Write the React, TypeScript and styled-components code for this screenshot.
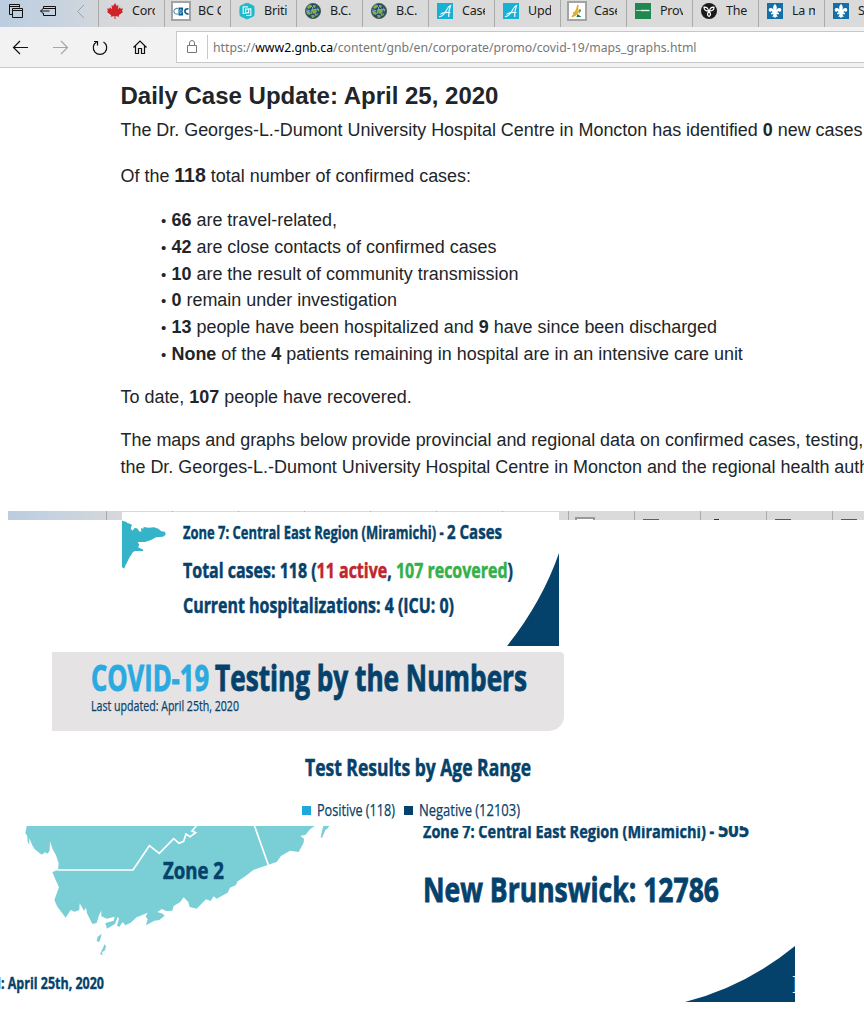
import React, { useLayoutEffect, useRef, useState } from "react";
import styled, { createGlobalStyle } from "styled-components";

const Global = createGlobalStyle`
  * { box-sizing: border-box; }
  body { margin: 0; background: #fff; overflow: hidden; }
`;

const ui = `"Noto Sans", "Open Sans", sans-serif`;
const navy = "#05426b";

const FitBox = styled.span<{ $w: number; $lh: number; $size: number; $bold?: boolean; $color?: string; $font?: string }>`
  display: block;
  flex: none;
  width: ${(p) => p.$w}px;
  height: ${(p) => p.$lh}px;
  line-height: ${(p) => p.$lh}px;
  font-family: ${(p) => p.$font || `"Open Sans", sans-serif`};
  font-size: ${(p) => p.$size}px;
  font-weight: ${(p) => (p.$bold ? 700 : 400)};
  -webkit-text-stroke: ${(p) => (p.$font ? 0 : p.$bold ? p.$size * 0.024 : 0.25)}px;
  color: ${(p) => p.$color || navy};
  white-space: pre;
`;
const FitInner = styled.span`
  display: inline-block;
  transform-origin: 0 50%;
`;

type FitProps = { w: number; lh: number; size: number; bold?: boolean; color?: string; font?: string; children: React.ReactNode };

/* Condenses a line of text to the given width. */
function Fit({ w, lh, size, bold, color, font, children }: FitProps) {
  const ref = useRef<HTMLSpanElement>(null);
  const [k, setK] = useState(1);
  useLayoutEffect(() => {
    const measure = () => {
      if (ref.current && ref.current.offsetWidth) {
        const cs = parseFloat(getComputedStyle(ref.current).width);
        setK(w / cs);
      }
    };
    measure();
    document.fonts?.ready.then(measure);
  }, [w]);
  return (
    <FitBox $w={w} $lh={lh} $size={size} $bold={bold} $color={color} $font={font}>
      <FitInner ref={ref} style={{ transform: `scaleX(${k})` }}>{children}</FitInner>
    </FitBox>
  );
}

const Page = styled.div`
  width: 864px;
  height: 1034px;
  overflow: hidden;
  background: #fff;
`;

/* Browser chrome */
const TabBar = styled.div`
  display: flex;
  height: 27px;
  overflow: hidden;
  background: linear-gradient(90deg, #bccddf 0, #c8d3df 60px, #d6d8da 110px, #dadada 180px);
`;
const TabTools = styled.div`
  display: flex;
  flex: none;
  width: 98px;
  height: 27px;
`;
const Tab = styled.div`
  display: flex;
  flex: none;
  width: 66px;
  height: 27px;
  padding: 3px 0 0 8px;
  border-left: 1px solid #aaa;
`;
const TabIcon = styled.span`
  flex: none;
  width: 20px;
  height: 18px;
  margin: 0 4px 0 -2px;
  svg { display: block; }
`;
const TabLabel = styled.span`
  width: 23px;
  overflow: hidden;
  margin-left: 3px;
  font: 12.5px/16px ${ui};
  letter-spacing: -0.2px;
  white-space: nowrap;
  color: #1c1c1c;
`;
const Toolbar = styled.div`
  display: flex;
  height: 41px;
  background: #f2f2f2;
  border-bottom: 1px solid #c9c9c9;
`;
const NavIcons = styled.div`
  flex: none;
  width: 176px;
  svg { display: block; }
`;
const Address = styled.div`
  display: flex;
  flex: 1;
  align-items: center;
  height: 32px;
  margin-top: 4px;
  background: #fff;
  border: 1px solid #c8c8c8;
  border-right: 0;
`;
const LockBox = styled.span`
  flex: none;
  width: 31px;
  height: 24px;
  border-right: 1px solid #c8c8c8;
  margin-right: 5px;
  svg { display: block; }
`;
const Host = styled.span`
  color: #000;
`;

/* Article */
const Article = styled.main`
  height: 443px;
  padding: 12px 0 0 120.5px;
  font: 17.95px/27px "Liberation Sans", Arial, sans-serif;
  color: #212529;
  white-space: nowrap;
`;
const Title = styled.h1`
  margin: 0;
  font-size: 24px;
  line-height: 32px;
`;
const Para = styled.p<{ $top: number; $tight?: boolean }>`
  margin: ${(p) => p.$top}px 0 0;
  letter-spacing: ${(p) => (p.$tight ? "-0.01px" : "0")};
`;
const Big = styled.b`
  display: inline-block;
  height: 20px;
  line-height: 20px;
  font-size: 19.5px;
`;
const List = styled.ul`
  list-style: none;
  margin: 17px 0 0;
  padding: 0 0 0 40.5px;
  line-height: 26.75px;
`;
const Dot = styled.span`
  display: inline-block;
  width: 10.5px;
  font-size: 15px;
  line-height: 15px;
`;

/* Leftover slice of the tab bar behind the zone summary */
const Strip = styled.div`
  display: flex;
  height: 9px;
  margin-left: 8px;
  overflow: hidden;
  background: linear-gradient(90deg, #bccddf 0, #c8d3df 60px, #d6d8da 110px, #dadada 180px);
`;
const StripLead = styled.div<{ $w: number }>`
  flex: none;
  width: ${(p) => p.$w}px;
`;
const StripTab = styled.div`
  flex: none;
  width: 66px;
  height: 9px;
  border-left: 1px solid #aaa;
  padding-left: 8px;
`;
const StripIcon = styled.div<{ $c: string; $w: number; $x: number; $framed?: boolean }>`
  width: ${(p) => p.$w}px;
  height: ${(p) => (p.$framed ? 3 : 1)}px;
  margin: ${(p) => (p.$framed ? 6 : 8)}px 0 0 ${(p) => p.$x}px;
  border: ${(p) => (p.$framed ? "2px solid #999" : "0")};
  border-bottom: 0;
  background: ${(p) => p.$c};
`;
const ZoneCard = styled.section`
  position: relative;
  display: flex;
  width: 437px;
  height: 134px;
  margin: -8px 0 0 122px;
  padding-top: 1px;
  background: #fff;
`;
const Coast = styled.svg`
  flex: none;
  display: block;
  width: 61px;
  height: 70px;
  margin-top: -1px;
`;
const Corner = styled.svg`
  position: absolute;
  right: 0;
  bottom: 0;
`;
const Row = styled.div`
  display: flex;
`;
const Red = styled.span`color: #bf272d;`;
const Green = styled.span`color: #35b04a;`;

const Banner = styled.header`
  width: 512px;
  height: 79px;
  margin: 6px 0 0 52px;
  padding: 5px 0 0 39px;
  background: #e5e3e4;
  border-radius: 0 4px 15px 0;
`;
const TitleRow = styled.div`
  display: flex;
  gap: 6px;
  height: 40px;
`;
const AgeRange = styled.section`
  height: 95px;
  padding: 21px 0 0 302px;
`;
const AgeTitle = styled.div`
  padding-left: 3px;
`;
const Legend = styled.div`
  display: flex;
  align-items: center;
  margin-top: 14px;
`;
const Swatch = styled.i<{ $c: string; $ml?: number }>`
  flex: none;
  width: 9px;
  height: 9px;
  margin: 0 6px 0 ${(p) => p.$ml || 0}px;
  background: ${(p) => p.$c};
`;

const MapSection = styled.section`
  position: relative;
  display: flex;
  width: 795px;
  height: 176px;
  overflow: hidden;
`;
const MapColumn = styled.div`
  position: relative;
  flex: none;
  width: 423px;
  > svg { display: block; }
`;
const MapLabel = styled.div`
  position: absolute;
  left: 163px;
  top: 30px;
`;
const Updated = styled.div`
  margin: 17px 0 0 -7px;
`;
const Total = styled.div`
  margin: 28px 0 0;
`;
const CornerMark = styled.span`
  position: absolute;
  right: 0;
  bottom: 4px;
  width: 3px;
  overflow: hidden;
  font: 25px/26px "Liberation Serif", serif;
  color: #fff;
`;

const Globe = () => (
  <svg width="20" height="18" viewBox="0 0 20 18">
    <circle cx="10" cy="8" r="7.600" fill="#244c66" stroke="#3c4f55" strokeWidth=".8" />
    <path d="M4 4l3-2.500 2 1L7.500 5 5 6zM10 2l3 .5L12 5l-2-1zM3 8l3 0 2 2-1 2-3-1zM9 6l4 0 1 3-3 2-2-2zM14 4l2.500 3-1.500 2zM8 12l3 0 1 2-3 1zM13 11l2.500-1-1.500 3z" fill="#83ad4e" />
    <path d="M8 3l2 2-2 3 1 3M3 7l4 .5M12 6l4 1M12 10l1 3" stroke="#6fb0dd" strokeWidth="1" fill="none" />
  </svg>
);
const ScriptA = () => (
  <svg width="20" height="18" viewBox="0 0 20 18">
    <rect x="2" width="16" height="16" fill="#19b0d6" />
    <path d="M4 13.500c3 .5 5-2 7-5.500s2.500-5 4.500-5.500c-1 3-2.200 7-1.700 11.500M5.500 11.500c2-2.500 5-2 10-2" stroke="#e9fbff" strokeWidth="1.200" fill="none" />
  </svg>
);
const Fleur = () => (
  <svg width="20" height="18" viewBox="0 0 20 18">
    <rect x="2" width="16" height="16" fill="#146fa9" />
    <path d="M10 1c2 2 2.500 4 .8 8 .7-3 2.200-4.500 4-4 2 .5 2 3.500-.3 4 0-1.500-1.500-1-2 .8H14v1.400h-2.500c0 1 .7 1.800 1.500 2.300-1.200.2-2 .2-3 1.500-1-1.300-1.800-1.300-3-1.500.8-.5 1.500-1.300 1.500-2.300H6V9.800h1.500C7 8 5.500 7.500 5.500 9 3.200 8.500 3.200 5.500 5.200 5c1.800-.5 3.300 1 4 4C7.500 5 8 3 10 1z" fill="#fff" />
  </svg>
);
const Maple = () => (
  <svg width="20" height="18" viewBox="0 0 20 18">
    <path d="M10 0l1.800 3 1.700-1-.6 4.200 2.100-2 .6 1.500 2.400-.3-1 2.600L18 9l-4.200 3.200.4 1.500-3.700-.6V16h-1v-2.900l-3.700.6.4-1.500L2 9l1-1-1-2.600 2.400.3.600-1.500 2.100 2L6.500 2l1.700 1z" fill="#cf2229" />
  </svg>
);
const Cdc = () => (
  <svg width="20" height="18" viewBox="0 0 20 18" overflow="visible">
    <rect x="1" y="-1" width="18" height="18" fill="#fff" stroke="#a3a3a3" strokeWidth="2" />
    <path d="M7 5.500C1.500 4.500 1.500 12 7 11" fill="none" stroke="#4b93b8" strokeWidth="1.100" />
    <path d="M7.500 4.500H12v8H7.500z" fill="#0b5c8f" />
    <path d="M9 6.500v4c3 0 3-4 0-4" fill="none" stroke="#9ccbe0" strokeWidth=".9" />
    <path d="M17.500 6c-4.500-1.300-5 5.300 0 5" fill="none" stroke="#15608e" strokeWidth="1.800" />
  </svg>
);
const Hex = () => (
  <svg width="20" height="18" viewBox="0 0 20 18">
    <path d="M10 0l6.800 3.200Q17.500 8 16.800 12.800L10 16l-6.800-3.200Q2.500 8 3.200 3.200z" fill="#1fb9c9" stroke="#1fb9c9" strokeLinejoin="round" />
    <path d="M11 3.800H6.200v6.700H8.500M9 12.500h4.800V5.800H11.500M8.600 6.200h3v3.700h-3z" stroke="#dcfbff" strokeWidth="1.200" fill="none" />
  </svg>
);
const Wheat = () => (
  <svg width="20" height="18" viewBox="0 0 20 18" overflow="visible">
    <rect x="1" y="-1" width="18" height="18" fill="#fff" stroke="#a3a3a3" strokeWidth="2" />
    <path d="M5 14c3-3 5-6 6-12M6 10c3 0 4-3 5-5M6 13c4-1 4-4 7-6" stroke="#e0ad31" strokeWidth="1.700" fill="none" />
    <path d="M10.500 11l4 3h-5zM12.500 6l1.500 1-1.500 4z" fill="#177a4b" />
  </svg>
);
const Saskatchewan = () => (
  <svg width="20" height="18" viewBox="0 0 20 18">
    <rect x="2" width="16" height="16" fill="#20884f" />
    <path d="M3 7.500h5.500" stroke="#b9dcc8" strokeWidth="1" />
    <path d="M8 7.500h8.500" stroke="#e3f2e9" strokeWidth="1.400" />
  </svg>
);
const Trillium = () => (
  <svg width="20" height="18" viewBox="0 0 20 18">
    <circle cx="10" cy="8" r="8" fill="#1a1a1a" />
    <path d="M9.500 8C6.500 8 5 6.500 5 4.200 7.500 4 9 5 9.500 8zM10.500 8c3 0 4.500-1.500 4.500-3.800C12.500 4 11 5 10.500 8zM10 8.500c-2 2-2 3.500 0 5 2-1.500 2-3 0-5z" fill="none" stroke="#fff" strokeWidth="1.200" />
  </svg>
);

const tabs: [React.ComponentType, string][] = [
  [Maple, "Coronavirus"], [Cdc, "BC Centre"], [Hex, "Briti"], [Globe, "B.C."], [Globe, "B.C."], [ScriptA, "Cases"],
  [ScriptA, "Upd"], [Wheat, "Cases"], [Saskatchewan, "Provincial"], [Trillium, "The"], [Fleur, "La maladie"], [Fleur, "Situation"],
];

export default function App() {
  return (
    <Page>
      <Global />
      <TabBar>
        <TabTools>
          <svg width="98" height="27" fill="none" stroke="#111">
            <path d="M12.500 14.500h-3v-10h10v3M12.500 8.500h10v9h-10zM12.500 10.500h10M9.500 6.500h10" />
            <path d="M43.500 9V6.500h12v9h-12V13M43.500 8.500h12M40.500 11h9M43.500 8.200l-3 2.800 3 2.800" />
            <path d="M84 5l-6.500 6.500L84 18" stroke="#9aa0a6" />
          </svg>
        </TabTools>
        {tabs.map(([Icon, label], i) => (
          <Tab key={i}>
            <TabIcon><Icon /></TabIcon>
            <TabLabel>{label}</TabLabel>
          </Tab>
        ))}
      </TabBar>
      <Toolbar>
        <NavIcons>
          <svg width="176" height="40" fill="none" stroke="#111" strokeWidth="1.200">
            <path d="M28 20.500H13.500M20 14l-6.500 6.500L20 27" />
            <path d="M53 20.500h14.500M61 14l6.500 6.500L61 27" stroke="#a6a6a6" />
            <path d="M96.500 15A6.700 6.700 0 1 0 103.500 15M94 14.500h3.500v4" />
            <path d="M133.500 20.500l6.500-6.500 6.500 6.500M135.500 19v7.500h3v-5h3v5h3V19" />
          </svg>
        </NavIcons>
        <Address>
          <LockBox>
            <svg width="30" height="24" fill="none" stroke="#777">
              <path d="M10.500 10.500h9v7h-9zM12.500 10.500V8a2.500 2.500 0 0 1 5 0v2.500" />
            </svg>
          </LockBox>
          <Fit w={483.5} lh={24} size={13} color="#777" font={ui}>
            https://<Host>www2.gnb.ca</Host>/content/gnb/en/corporate/promo/covid-19/maps_graphs.html
          </Fit>
        </Address>
      </Toolbar>

      <Article>
        <Title>Daily Case Update: April 25, 2020</Title>
        <Para $top={5} $tight>The Dr. Georges-L.-Dumont University Hospital Centre in Moncton has identified <b>0</b> new cases of COVID-19.</Para>
        <Para $top={19}>Of the <Big>118</Big> total number of confirmed cases:</Para>
        <List>
          <li><Dot>•</Dot><b>66</b> are travel-related,</li>
          <li><Dot>•</Dot><b>42</b> are close contacts of confirmed cases</li>
          <li><Dot>•</Dot><b>10</b> are the result of community transmission</li>
          <li><Dot>•</Dot><b>0</b> remain under investigation</li>
          <li><Dot>•</Dot><b>13</b> people have been hospitalized and <b>9</b> have since been discharged</li>
          <li><Dot>•</Dot><b>None</b> of the <b>4</b> patients remaining in hospital are in an intensive care unit</li>
        </List>
        <Para $top={16}>To date, <b>107</b> people have recovered.</Para>
        <Para $top={16}>
          The maps and graphs below provide provincial and regional data on confirmed cases, testing,<br />
          the Dr. Georges-L.-Dumont University Hospital Centre in Moncton and the regional health authorities.
        </Para>
      </Article>

      <Strip>
        <StripLead $w={98} />
        {[0, 1, 2, 3, 4, 5, 6].map((i) => <StripTab key={i} />)}
        <StripTab><StripIcon $framed $c="#fff" $w={20} $x={-2} /></StripTab>
        <StripTab><StripIcon $c="#20884f" $w={16} $x={0} /></StripTab>
        <StripTab><StripIcon $c="#333" $w={5} $x={5} /></StripTab>
        <StripTab><StripIcon $c="#146fa9" $w={16} $x={0} /></StripTab>
        <StripTab><StripIcon $c="#146fa9" $w={16} $x={0} /></StripTab>
      </Strip>
      <ZoneCard>
        <Coast viewBox="366 21 183 210">
          <path d="M366 47L378 50 382 54 390 56 396 60 392 70 397 77 405 68 413 71 417 79 424 80 423 69 430 71 431 66 446 68 462 67 475 71 484 79 495 80 497 89 489 95 468 97 455 104 435 111 413 111 418 119 414 127 430 134 429 138 405 138 399 141 388 158 376 182 372 191 366 186z" fill="#35b3c9" />
        </Coast>
        <div>
          <Row>
            <Fit w={264} lh={40} size={17} bold>{"Zone 7: Central East Region (Miramichi) - "}</Fit>
            <Fit w={55} lh={39} size={19} bold>2 Cases</Fit>
          </Row>
          <Fit w={330} lh={33} size={21.5} bold>
            Total cases: 118 (<Red>11 active</Red>, <Green>107 recovered</Green>)
          </Fit>
          <Fit w={271} lh={38} size={21} bold>Current hospitalizations: 4 (ICU: 0)</Fit>
        </div>
        <Corner width="52" height="94" viewBox="0 0 52 94">
          <path d="M52 1Q35 50 0 94H52z" fill={navy} />
        </Corner>
      </ZoneCard>

      <Banner>
        <TitleRow>
          <Fit w={118} lh={40} size={35.5} bold color="#2aaae0">COVID-19</Fit>
          <Fit w={312} lh={40} size={35.5} bold>Testing by the Numbers</Fit>
        </TitleRow>
        <Fit w={148} lh={17} size={15}>Last updated: April 25th, 2020</Fit>
      </Banner>

      <AgeRange>
        <AgeTitle><Fit w={226} lh={31} size={22.4} bold>Test Results by Age Range</Fit></AgeTitle>
        <Legend>
          <Swatch $c="#1ea8dd" />
          <Fit w={78} lh={26} size={16}>Positive (118)</Fit>
          <Swatch $c={navy} $ml={9} />
          <Fit w={101} lh={26} size={16}>Negative (12103)</Fit>
        </Legend>
      </AgeRange>

      <MapSection>
        <MapColumn>
          <svg width="350" height="130" viewBox="0 18 1050 390">
            <g fill="#7acfd6">
              <path d="M80 18L76 40 82 48 83 66 88 74 88 54 96 74 104 88 125 104 135 97 143 101 149 92 150 64 158 88 168 106 176 130 174 150 157 156 167 180 177 202 163 240 172 260 197 293 212 270 224 275 238 270 239 250 252 272 258 263 261 280 277 312 290 309 297 286 304 272 304 289 320 296 344 290 341 302 316 309 321 326 345 312 353 290 357 296 351 316 357 322 368 306 376 316 392 308 410 292 443 278 437 290 443 297 438 316 463 302 478 300 494 287 488 281 472 276 486 267 498 273 517 272 521 258 540 247 551 232 565 246 569 261 590 266 604 252 618 238 632 243 641 229 650 236 683 218 690 203 707 196 713 184 734 170 760 150 805 134 830 126 843 108 870 92 896 96 911 68 912 56 901 48 917 44 930 28 944 18z" />
              <path d="M970 18H988L982 26 976 30 967 52 962 54 965 36zM293 350L305 341 301 358 297 367 290 362zM314 373L318 378 315 391 306 397 308 406 300 402 306 390z" />
            </g>
            <path d="M172 150H399L448 77 478 100 521 56 537 70 551 64 558 42 570 50 587 38 576 33 589 18M763 16L805 135" fill="none" stroke="#fff" strokeWidth="5" />
          </svg>
          <MapLabel><Fit w={61} lh={29} size={23} bold>Zone 2</Fit></MapLabel>
          <Updated><Fit w={111} lh={21} size={15.5} bold>d: April 25th, 2020</Fit></Updated>
        </MapColumn>
        <div>
          <Row>
            <Fit w={295} lh={10} size={17.5} bold>{"Zone 7: Central East Region (Miramichi) - "}</Fit>
            <Fit w={31} lh={9} size={19} bold>505</Fit>
          </Row>
          <Total><Fit w={296} lh={50} size={34} bold>New Brunswick: 12786</Fit></Total>
        </div>
        <Corner width="110" height="56" viewBox="0 0 110 56">
          <path d="M110 0Q60 41 0 56H110z" fill={navy} />
        </Corner>
        <CornerMark>B</CornerMark>
      </MapSection>
    </Page>
  );
}
